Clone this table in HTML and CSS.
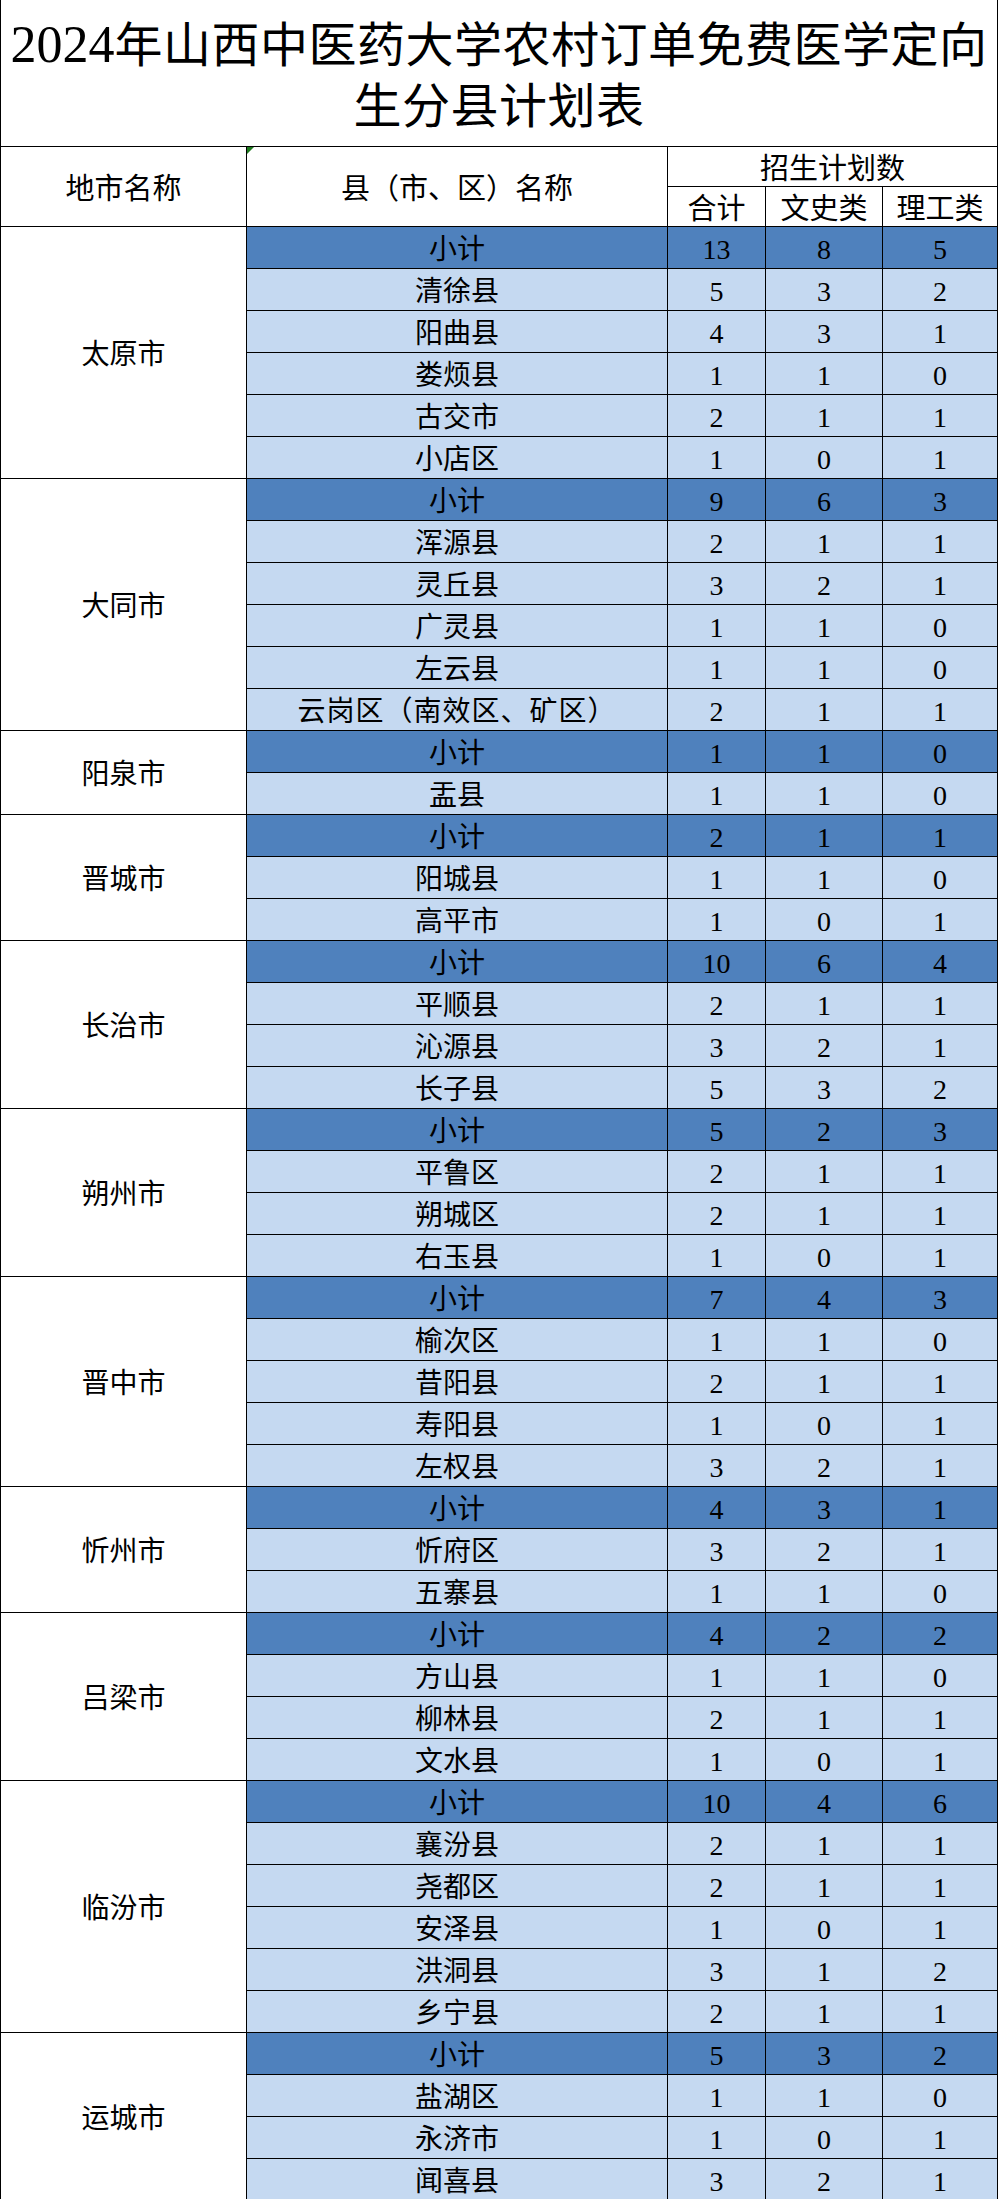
FILE: index.html
```html
<!DOCTYPE html>
<html lang="zh-CN">
<head>
<meta charset="utf-8">
<title>2024年山西中医药大学农村订单免费医学定向生分县计划表</title>
<link rel="stylesheet" href="styles.css">
</head>
<body>
<table class="plan">
  <colgroup>
    <col class="c-city"><col class="c-county"><col class="c-num1"><col class="c-num2"><col class="c-num3">
  </colgroup>
  <thead>
    <tr class="title-row">
      <th colspan="5" class="title"><span class="yr">2024</span>年山西中医药大学农村订单免费医学定向<br>生分县计划表</th>
    </tr>
    <tr class="head1">
      <th rowspan="2" class="hd">地市名称</th>
      <th rowspan="2" class="hd county-hd">县（市、区）名称</th>
      <th colspan="3" class="hd">招生计划数</th>
    </tr>
    <tr class="head2">
      <th class="hd">合计</th>
      <th class="hd">文史类</th>
      <th class="hd">理工类</th>
    </tr>
  </thead>
  <tbody>
    <tr class="row sub"><td rowspan="6" class="city">太原市</td><td>小计</td><td>13</td><td>8</td><td>5</td></tr>
    <tr class="row"><td>清徐县</td><td>5</td><td>3</td><td>2</td></tr>
    <tr class="row"><td>阳曲县</td><td>4</td><td>3</td><td>1</td></tr>
    <tr class="row"><td>娄烦县</td><td>1</td><td>1</td><td>0</td></tr>
    <tr class="row"><td>古交市</td><td>2</td><td>1</td><td>1</td></tr>
    <tr class="row"><td>小店区</td><td>1</td><td>0</td><td>1</td></tr>

    <tr class="row sub"><td rowspan="6" class="city">大同市</td><td>小计</td><td>9</td><td>6</td><td>3</td></tr>
    <tr class="row"><td>浑源县</td><td>2</td><td>1</td><td>1</td></tr>
    <tr class="row"><td>灵丘县</td><td>3</td><td>2</td><td>1</td></tr>
    <tr class="row"><td>广灵县</td><td>1</td><td>1</td><td>0</td></tr>
    <tr class="row"><td>左云县</td><td>1</td><td>1</td><td>0</td></tr>
    <tr class="row"><td class="wide">云岗区（南效区、矿区）</td><td>2</td><td>1</td><td>1</td></tr>

    <tr class="row sub"><td rowspan="2" class="city">阳泉市</td><td>小计</td><td>1</td><td>1</td><td>0</td></tr>
    <tr class="row"><td>盂县</td><td>1</td><td>1</td><td>0</td></tr>

    <tr class="row sub"><td rowspan="3" class="city">晋城市</td><td>小计</td><td>2</td><td>1</td><td>1</td></tr>
    <tr class="row"><td>阳城县</td><td>1</td><td>1</td><td>0</td></tr>
    <tr class="row"><td>高平市</td><td>1</td><td>0</td><td>1</td></tr>

    <tr class="row sub"><td rowspan="4" class="city">长治市</td><td>小计</td><td>10</td><td>6</td><td>4</td></tr>
    <tr class="row"><td>平顺县</td><td>2</td><td>1</td><td>1</td></tr>
    <tr class="row"><td>沁源县</td><td>3</td><td>2</td><td>1</td></tr>
    <tr class="row"><td>长子县</td><td>5</td><td>3</td><td>2</td></tr>

    <tr class="row sub"><td rowspan="4" class="city">朔州市</td><td>小计</td><td>5</td><td>2</td><td>3</td></tr>
    <tr class="row"><td>平鲁区</td><td>2</td><td>1</td><td>1</td></tr>
    <tr class="row"><td>朔城区</td><td>2</td><td>1</td><td>1</td></tr>
    <tr class="row"><td>右玉县</td><td>1</td><td>0</td><td>1</td></tr>

    <tr class="row sub"><td rowspan="5" class="city">晋中市</td><td>小计</td><td>7</td><td>4</td><td>3</td></tr>
    <tr class="row"><td>榆次区</td><td>1</td><td>1</td><td>0</td></tr>
    <tr class="row"><td>昔阳县</td><td>2</td><td>1</td><td>1</td></tr>
    <tr class="row"><td>寿阳县</td><td>1</td><td>0</td><td>1</td></tr>
    <tr class="row"><td>左权县</td><td>3</td><td>2</td><td>1</td></tr>

    <tr class="row sub"><td rowspan="3" class="city">忻州市</td><td>小计</td><td>4</td><td>3</td><td>1</td></tr>
    <tr class="row"><td>忻府区</td><td>3</td><td>2</td><td>1</td></tr>
    <tr class="row"><td>五寨县</td><td>1</td><td>1</td><td>0</td></tr>

    <tr class="row sub"><td rowspan="4" class="city">吕梁市</td><td>小计</td><td>4</td><td>2</td><td>2</td></tr>
    <tr class="row"><td>方山县</td><td>1</td><td>1</td><td>0</td></tr>
    <tr class="row"><td>柳林县</td><td>2</td><td>1</td><td>1</td></tr>
    <tr class="row"><td>文水县</td><td>1</td><td>0</td><td>1</td></tr>

    <tr class="row sub"><td rowspan="6" class="city">临汾市</td><td>小计</td><td>10</td><td>4</td><td>6</td></tr>
    <tr class="row"><td>襄汾县</td><td>2</td><td>1</td><td>1</td></tr>
    <tr class="row"><td>尧都区</td><td>2</td><td>1</td><td>1</td></tr>
    <tr class="row"><td>安泽县</td><td>1</td><td>0</td><td>1</td></tr>
    <tr class="row"><td>洪洞县</td><td>3</td><td>1</td><td>2</td></tr>
    <tr class="row"><td>乡宁县</td><td>2</td><td>1</td><td>1</td></tr>

    <tr class="row sub"><td rowspan="4" class="city">运城市</td><td>小计</td><td>5</td><td>3</td><td>2</td></tr>
    <tr class="row"><td>盐湖区</td><td>1</td><td>1</td><td>0</td></tr>
    <tr class="row"><td>永济市</td><td>1</td><td>0</td><td>1</td></tr>
    <tr class="row"><td>闻喜县</td><td>3</td><td>2</td><td>1</td></tr>
  </tbody>
</table>
</body>
</html>
```
FILE: styles.css
```css
html, body {
  margin: 0;
  padding: 0;
  background: #ffffff;
}

.plan {
  width: 998px;
  table-layout: fixed;
  border-collapse: collapse;
  font-family: "Liberation Serif", "Noto Sans CJK SC", serif;
  color: #000;
}

.c-city { width: 246px; }
.c-county { width: 421px; }
.c-num1 { width: 98px; }
.c-num2 { width: 117px; }
.c-num3 { width: 115px; }

.plan th,
.plan td {
  border: 1px solid #000;
  padding: 0;
  text-align: center;
  vertical-align: middle;
  font-weight: 400;
  white-space: nowrap;
}

.title-row { height: 146px; }

.plan th.title {
  border-top: none;
  font-size: 48px;
  letter-spacing: 0.5px;
  line-height: 61px;
  padding-top: 6px;
}

.yr {
  font-size: 52px;
  letter-spacing: 0;
}

.head1 { height: 38px; }
.head2 { height: 40px; }

.plan th.hd {
  font-size: 29px;
  line-height: 34px;
  padding-top: 5px;
}

.county-hd { position: relative; }

.county-hd::before {
  content: "";
  position: absolute;
  left: 0;
  top: 0;
  width: 0;
  height: 0;
  border-top: 7px solid #1f7a1f;
  border-right: 7px solid transparent;
}

.row { height: 42px; }

.plan td {
  font-size: 28px;
  line-height: 34px;
  padding-top: 5px;
  background: #c5d9f1;
}

.plan td.wide {
  letter-spacing: 1px;
}

.plan td.city {
  background: #ffffff;
}

.row.sub td {
  background: #4f81bd;
}

.row.sub td.city {
  background: #ffffff;
}
```
